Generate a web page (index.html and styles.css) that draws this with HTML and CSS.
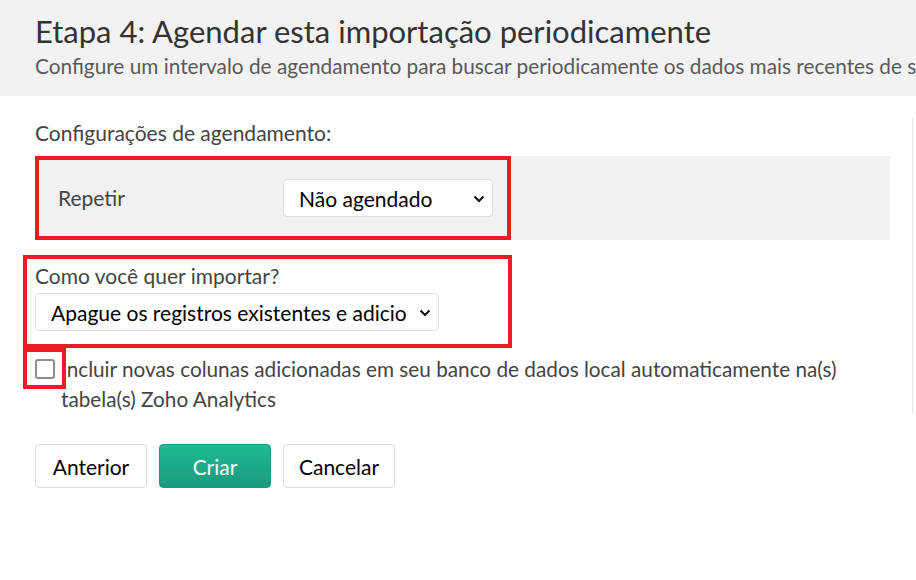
FILE: index.html
```html
<!DOCTYPE html>
<html>
<head>
  <title>Agendar importação</title>
  <link rel="stylesheet" href="styles.css">
</head>
<body>
  <div class="header">
    <h1>Etapa 4: Agendar esta importação periodicamente</h1>
    <p class="subtitle">Configure um intervalo de agendamento para buscar periodicamente os dados mais recentes de sua fonte de dados.</p>
  </div>

  <div class="content">
    <div class="settings">
      <div class="settings-main">
        <p class="section-label">Configurações de agendamento:</p>

        <div class="repeat-panel">
          <div class="highlight repeat-row">
            <span class="field-label">Repetir</span>
            <div class="select-wrap repeat-select">
              <select>
                <option>Não agendado</option>
                <option>Diariamente</option>
                <option>Semanalmente</option>
              </select>
              <svg class="chevron" width="12" height="8" viewBox="0 0 12 8"><path d="M1.5 1.5 L6 6 L10.5 1.5" fill="none" stroke="#111" stroke-width="2"/></svg>
            </div>
          </div>
        </div>

        <div class="highlight import-box">
          <p class="field-label">Como você quer importar?</p>
          <div class="select-wrap import-select">
            <select>
              <option>Apague os registros existentes e adicione</option>
              <option>Anexar</option>
            </select>
            <svg class="chevron" width="12" height="8" viewBox="0 0 12 8"><path d="M1.5 1.5 L6 6 L10.5 1.5" fill="none" stroke="#111" stroke-width="2"/></svg>
          </div>
        </div>

        <div class="check-row">
          <span class="checkbox"></span>
          <span class="check-text">Incluir novas colunas adicionadas em seu banco de dados local automaticamente na(s) tabela(s) Zoho Analytics</span>
          <span class="check-mark"></span>
        </div>
      </div>
      <div class="settings-side"></div>
    </div>

    <div class="actions">
      <button class="button">Anterior</button>
      <button class="button primary">Criar</button>
      <button class="button">Cancelar</button>
    </div>
  </div>
</body>
</html>
```

FILE: styles.css
```css
body {
  margin: 0;
  font-family: Lato, "Open Sans", sans-serif;
  color: #444;
  background-color: white;
}
.header {
  background-color: #f2f2f2;
  height: 96px;
  box-sizing: border-box;
  padding: 12px 0 0 35px;
  overflow: hidden;
  white-space: nowrap;
}
h1 {
  margin: 0;
  font-size: 31px;
  font-weight: normal;
  color: #333;
  line-height: 38px;
}
.subtitle {
  margin: 3px 0 0;
  font-size: 20.8px;
  color: #5a5a5a;
  line-height: 26px;
  overflow: hidden;
}
.content {
  padding-left: 35px;
}
.settings {
  display: flex;
  margin-top: 22px;
}
.settings-main {
  width: 855px;
  margin-right: 22px;
}
.settings-side {
  border-left: 1px solid #e6e6e6;
}
.section-label {
  margin: 4px 0 12px;
  font-size: 21px;
  line-height: 22px;
}
.repeat-panel {
  background-color: #f1f1f1;
  height: 84px;
}
.highlight {
  border: 4px solid #ed1c24;
  box-sizing: border-box;
}
.repeat-row {
  width: 476px;
  height: 84px;
  display: flex;
  align-items: center;
  padding-left: 19px;
}
.field-label {
  font-size: 21px;
  line-height: 22px;
  margin: 0;
}
.repeat-row .field-label {
  width: 225px;
}
.select-wrap {
  position: relative;
  width: fit-content;
}
.select-wrap select {
  display: block;
  appearance: none;
  -webkit-appearance: none;
  background-color: white;
  border: 1px solid #dcdcdc;
  border-radius: 4px;
  font-family: Lato, sans-serif;
  font-size: 21px;
  color: #000;
  padding: 0 30px 0 15px;
  outline: none;
}
.repeat-select select {
  width: 210px;
  height: 38px;
}
.import-select select {
  width: 404px;
  height: 38px;
}
.chevron {
  position: absolute;
  right: 8px;
  top: 16px;
}
.import-box {
  margin: 15px 0 0 -12px;
  width: 489px;
  height: 93px;
  padding: 6px 0 0 8px;
}
.import-box .field-label {
  margin-bottom: 6px;
}
.check-row {
  position: relative;
  display: flex;
  align-items: flex-start;
  margin-top: 10px;
}
.checkbox {
  flex: none;
  width: 16px;
  height: 16px;
  border: 2px solid #8d8c99;
  border-radius: 3px;
  margin-top: 1px;
}
.check-text {
  margin-left: 6px;
  margin-top: -4px;
  font-size: 20.75px;
  line-height: 30px;
  color: #444;
}
.check-mark {
  position: absolute;
  left: -12px;
  top: -10px;
  width: 43px;
  height: 41px;
  border: 4px solid #ed1c24;
  box-sizing: border-box;
}
.actions {
  display: flex;
  gap: 12px;
  margin-top: 30px;
}
.button {
  width: 112px;
  height: 44px;
  background-color: white;
  border: 1px solid #dcdcdc;
  border-radius: 4px;
  font-family: Lato, sans-serif;
  font-size: 21px;
  color: #000;
  cursor: pointer;
}
.primary {
  background: linear-gradient(#1fba95, #1a9a7e);
  border-color: #1a9a7e;
  color: white;
}
```
